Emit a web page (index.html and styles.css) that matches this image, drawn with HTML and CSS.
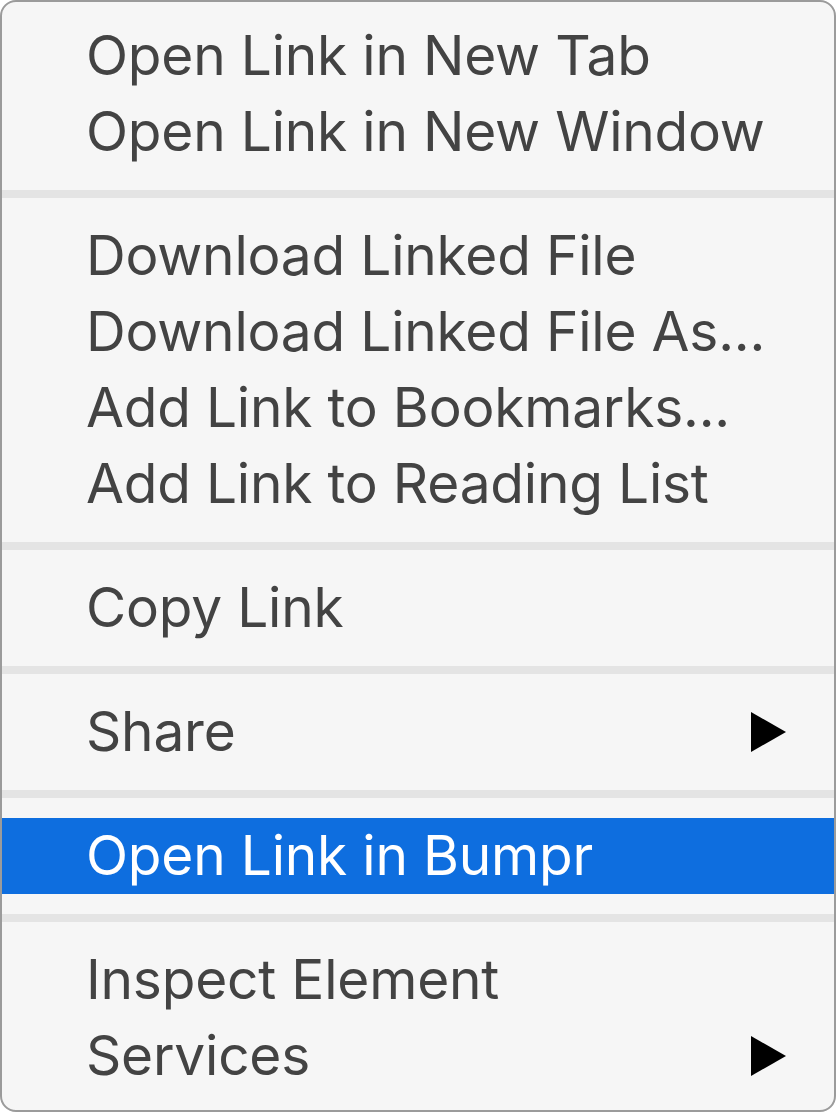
FILE: index.html
```html
<!DOCTYPE html>
<html>
<head>
<meta charset="utf-8">
<link rel="stylesheet" href="styles.css">
</head>
<body>
<div class="menu">
  <div class="section first">
    <div class="item">Open Link in New Tab</div>
    <div class="item">Open Link in New Window</div>
  </div>
  <div class="sep"></div>
  <div class="section">
    <div class="item">Download Linked File</div>
    <div class="item">Download Linked File As...</div>
    <div class="item">Add Link to Bookmarks...</div>
    <div class="item">Add Link to Reading List</div>
  </div>
  <div class="sep"></div>
  <div class="section">
    <div class="item">Copy Link</div>
  </div>
  <div class="sep"></div>
  <div class="section">
    <div class="item"><span>Share</span><span class="arrow"></span></div>
  </div>
  <div class="sep"></div>
  <div class="section">
    <div class="item active">Open Link in Bumpr</div>
  </div>
  <div class="sep"></div>
  <div class="section last">
    <div class="item">Inspect Element</div>
    <div class="item"><span>Services</span><span class="arrow"></span></div>
  </div>
</div>
</body>
</html>
```
FILE: styles.css
```css
html, body {
  margin: 0;
  padding: 0;
  background: #ffffff;
}
.menu {
  box-sizing: border-box;
  width: 836px;
  height: 1112px;
  border: 2px solid #9b9b9b;
  border-radius: 16px;
  background: #f6f6f6;
  overflow: hidden;
  font-family: Inter, "Noto Sans", sans-serif;
  font-size: 55px;
  color: #434343;
  display: flex;
  flex-direction: column;
}
.section {
  padding: 20px 0;
  display: flex;
  flex-direction: column;
}
.section.first {
  padding-top: 16px;
}
.section.last {
  padding-bottom: 14px;
}
.sep {
  height: 8px;
  background: #e4e4e4;
}
.item {
  box-sizing: border-box;
  height: 76px;
  display: flex;
  align-items: center;
  justify-content: space-between;
  padding: 0 48px 3px 84px;
  white-space: nowrap;
  letter-spacing: -0.2px;
}
.item.active {
  background: #0e6edf;
  color: #ffffff;
}
.arrow {
  width: 0;
  height: 0;
  margin-top: 3px;
  border-top: 20px solid transparent;
  border-bottom: 20px solid transparent;
  border-left: 35px solid #000;
}
```
